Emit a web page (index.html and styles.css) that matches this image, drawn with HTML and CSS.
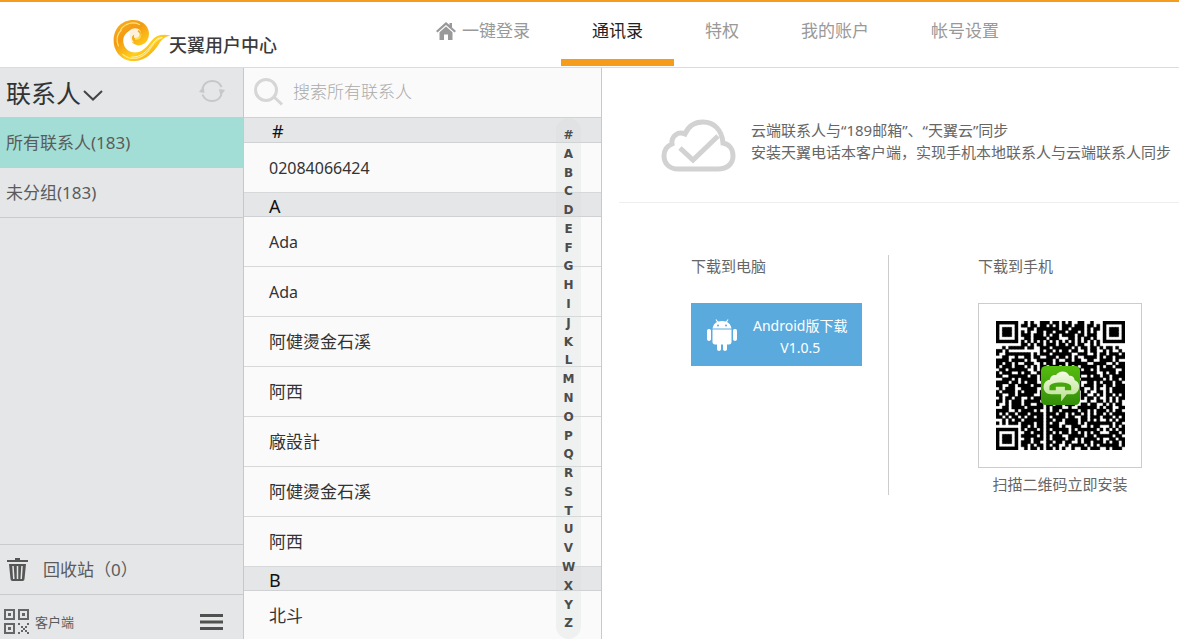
FILE: index.html
```html
<!DOCTYPE html>
<html lang="zh-CN">
<head>
<meta charset="utf-8">
<title>天翼用户中心</title>
<link rel="stylesheet" href="styles.css">
</head>
<body>
<header class="top">
  <a class="brand" href="#">
    <svg class="brand-mark" viewBox="0 0 58 44" aria-hidden="true">
      <defs>
        <linearGradient id="gold" x1="0" y1="0" x2="1" y2="1">
          <stop offset="0" stop-color="#f8b426"/><stop offset=".3" stop-color="#f39a12"/><stop offset=".6" stop-color="#ffcf1c"/><stop offset="1" stop-color="#f08a14"/>
        </linearGradient>
        <linearGradient id="gold2" x1="0" y1="0" x2="0" y2="1">
          <stop offset="0" stop-color="#f4a81c"/><stop offset="1" stop-color="#ffe04a"/>
        </linearGradient>
      </defs>
      <path fill="url(#gold)" d="M21 1C9 1 1 10 1 22c0 13 10 22 22 21 11-1 18-8 24-17 3-5 6-8 12-9-9-2-15 0-19 5-4 5-8 11-15 12-7 1-13-3-14-10-1-6 3-11 7-12-2 6 0 14 8 15 7 0 12-6 11-14C36 6 29 1 21 1z"/>
      <path fill="#fff" d="M14 17c2-6 7-9 12-7 4 2 4 8 0 10-3 1-5-1-4-4-3 1-3 5 0 8-5 0-8-3-8-7z" opacity=".85"/>
      <path fill="none" stroke="url(#gold2)" stroke-width="2" d="M26 12c5 3 2 9-3 8"/>
      <path fill="none" stroke="#ffe680" stroke-width="1.200" d="M10 36c12 9 23 3 30-8 3-5 6-8 11-9M8 11c5-7 14-9 20-5M6 28c-3-7-1-13 3-17"/>
      <path fill="none" stroke="#fff3bd" d="M19 39c11 0 16-6 22-14 3-4 6-6 10-6"/>
    </svg>
    <span>天翼用户中心</span>
  </a>
  <nav class="nav">
    <a href="#"><svg class="home" viewBox="0 0 20 18" aria-hidden="true"><path d="M10 0 0 9l1.500 1.500L10 3l8.500 7.500L20 9l-4-3.600V1h-2.500v2.100z"/><path d="M10 4.500 3.500 10.300V18H8v-5.500h4V18h4.500v-7.700z"/></svg>一键登录</a>
    <a href="#" class="current" aria-current="page">通讯录</a>
    <a href="#">特权</a>
    <a href="#">我的账户</a>
    <a href="#">帐号设置</a>
  </nav>
</header>
<div class="main">
  <aside class="side">
    <div class="side-head">
      <button class="title" type="button">联系人<svg class="chev" viewBox="0 0 20 11" aria-hidden="true"><path d="m1 1 9 8.500L19 1"/></svg></button>
      <button class="sync" type="button" aria-label="刷新"><svg viewBox="0 0 26 24" aria-hidden="true"><path class="ring" d="M3.500 9a10.200 10.200 0 0 1 19-1M22.500 15.500a10.200 10.200 0 0 1-19 0"/><path class="tips" d="m0 13 4.500-6 1 7zM26 11l-4.500 6-1.500-7z"/></svg></button>
    </div>
    <button class="group active" type="button">所有联系人(183)</button>
    <button class="group" type="button">未分组(183)</button>
    <div class="side-foot">
      <button class="trash" type="button">
        <svg viewBox="0 0 22 24" aria-hidden="true"><path fill="#565656" d="M0 2h8V0h5v2h8v2H0zM2 6h17l-1.500 15a2 2 0 0 1-2 2h-10a2 2 0 0 1-2-2z"/><path stroke="#e4e6e7" stroke-width="1.500" d="m6 8 .8 13M10.500 8v13M15 8l-.8 13"/></svg>
        回收站（0）</button>
      <div class="tools">
        <button class="client" type="button">
          <svg viewBox="0 0 25 25" aria-hidden="true"><path fill="none" stroke="#666" stroke-width="2" d="M1 1h9v9H1zM15 1h9v9h-9zM1 15h9v9H1z"/><path fill="#666" d="M4 4h3v3H4zM18 4h3v3h-3zM4 18h3v3H4zM14 14h2v2h-2zM23 14h2v2h-2zM14 23h2v2h-2zM23 23h2v2h-2zM17 17h2v2h-2zM21 17h2v2h-2zM19 19h2v2h-2zM17 21h2v2h-2zM21 21h2v2h-2z"/></svg>
          客户端</button>
        <button class="menu" type="button" aria-label="菜单"><svg viewBox="0 0 23 16" aria-hidden="true"><path d="M0 0h23v3H0zM0 6.500h23v3H0zM0 13h23v3H0z"/></svg></button>
      </div>
    </div>
  </aside>
  <section class="list">
    <label class="search">
      <svg viewBox="0 0 30 28" aria-label="搜索"><circle cx="12" cy="12" r="10.500"/><path d="m20 19 8 7.500"/></svg>
      <input type="text" placeholder="搜索所有联系人" aria-label="搜索所有联系人">
    </label>
    <h2 class="hash">#</h2>
    <ul><li class="latin">02084066424</li></ul>
    <h2>A</h2>
    <ul><li class="latin">Ada</li><li class="latin">Ada</li><li>阿健燙金石溪</li><li>阿西</li><li>廠設計</li><li>阿健燙金石溪</li><li>阿西</li></ul>
    <h2>B</h2>
    <ul><li>北斗</li></ul>
    <nav class="letters" aria-label="字母索引"><a href="#">#</a><a href="#">A</a><a href="#">B</a><a href="#">C</a><a href="#">D</a><a href="#">E</a><a href="#">F</a><a href="#">G</a><a href="#">H</a><a href="#">I</a><a href="#">J</a><a href="#">K</a><a href="#">L</a><a href="#">M</a><a href="#">N</a><a href="#">O</a><a href="#">P</a><a href="#">Q</a><a href="#">R</a><a href="#">S</a><a href="#">T</a><a href="#">U</a><a href="#">V</a><a href="#">W</a><a href="#">X</a><a href="#">Y</a><a href="#">Z</a></nav>
  </section>
  <main class="detail">
    <div class="info">
      <svg class="cloud" viewBox="0 0 75 53" aria-hidden="true"><path d="M17 50h40c9 0 15-5 15-13 0-7-4-12-10-13C61 11 53 3 42 3c-9 0-15 5-18 12-7-3-14 2-13 10-5 2-8 6-8 12 0 8 6 13 14 13z"/><path d="m19 29 13 12 25-24"/></svg>
      <p>云端联系人与“189邮箱”、“天翼云”同步<br>安装天翼电话本客户端，实现手机本地联系人与云端联系人同步</p>
    </div>
    <div class="downloads">
      <section class="pc">
        <h3>下载到电脑</h3>
        <a class="android" href="#">
          <svg viewBox="0 0 30 32" aria-hidden="true"><path d="M5.500 9.500C6 6 8 4 10 3L8.500.800l.8-.5L11 2.600a12 12 0 0 1 8 0L20.700.300l.8.5L20 3c2 1 4 3 4.500 6.500zM5.500 10.500h19V23c0 1.500-1 2.500-2.500 2.500h-2V30c0 2.600-4 2.600-4 0v-4.500h-2V30c0 2.600-4 2.600-4 0v-4.500H8c-1.500 0-2.500-1-2.500-2.500zM0 12c0-2.600 4-2.600 4 0v8c0 2.600-4 2.600-4 0zM26 12c0-2.600 4-2.600 4 0v8c0 2.600-4 2.600-4 0z"/><circle fill="#5aaade" cx="11" cy="6.500" r="1"/><circle fill="#5aaade" cx="19" cy="6.500" r="1"/></svg>
          <span>Android版下载<br>V1.0.5</span>
        </a>
      </section>
      <section class="phone">
        <h3>下载到手机</h3>
        <figure>
          <div class="frame">
            <svg class="code" viewBox="0 0 41 41" role="img" aria-label="二维码">
              <defs><linearGradient id="leaf" x1="0" y1="0" x2="0" y2="1"><stop offset="0" stop-color="#55bd10"/><stop offset="1" stop-color="#338e09"/></linearGradient>
              <linearGradient id="puff" x1="0" y1="0" x2="0" y2="1"><stop offset="0" stop-color="#f4fbe6"/><stop offset="1" stop-color="#b9e08d"/></linearGradient></defs>
              <path id="modules" stroke="#000" stroke-width=".12"/>
              <rect x="14.300" y="14.300" width="12.400" height="12.400" rx="1.500" fill="url(#leaf)"/>
              <path fill="url(#puff)" d="M17.500 23.300c-3 0-3.200-4.200-.4-4.600.2-1.200 1-1.700 2-1.500 1-1.700 3.500-1.500 4.200.2 1-.1 1.600.4 1.700 1.400 2.200.6 1.800 4.400-.8 4.500h-1.700L20.700 25.600v-2.300z"/>
              <path fill="#45a50c" d="M17 20.800c.3-1.700 6.600-1.700 6.900 0v1.200h-2v-1.100h-2.900V22h-2z"/>
            </svg>
          </div>
          <figcaption>扫描二维码立即安装</figcaption>
        </figure>
      </section>
    </div>
  </main>
</div>
<script src="code.js"></script>
</body>
</html>
```
FILE: styles.css
```css
* { box-sizing: border-box; margin: 0; padding: 0; }
body {
  display: flex; flex-direction: column; height: 100vh; overflow: hidden;
  border-top: 2px solid #f59c1c; background: #fff; color: #333;
  font: 17px/24px "Noto Sans", "Noto Sans CJK SC", sans-serif;
}
svg { display: block; flex: none; }
a { color: inherit; text-decoration: none; }
button { border: 0; background: none; color: inherit; font: inherit; text-align: left; cursor: pointer; }
ul { list-style: none; }

.top { display: flex; flex: none; height: 66px; padding-left: 112px; gap: 128px; border-bottom: 1px solid #dcdcdc; }
.brand { display: flex; align-items: flex-start; padding-top: 17px; color: #3b3b3b; font-size: 18px; font-weight: 500; white-space: nowrap; }
.brand-mark { width: 58px; height: 43px; }
.brand span { margin: 14px 0 0 -1px; }
.nav { display: flex; white-space: nowrap; color: #999; }
.nav a { display: flex; align-items: center; gap: 6px; height: 64px; padding: 0 31px; border-bottom: 7px solid transparent; }
.nav .current { color: #222; border-color: #f59c1c; }
.home { width: 20px; height: 18px; fill: #999; }

.main { display: flex; flex: 1; min-height: 0; }
.side { display: flex; flex-direction: column; flex: none; width: 244px; background: #e4e6e7; border-right: 1px solid #c6c8c9; color: #5b5b5b; }
.side-head { display: flex; justify-content: space-between; align-items: center; height: 50px; padding: 0 18px 3px 6px; border-bottom: 1px solid #c9cdcd; }
.title { display: flex; align-items: center; gap: 2px; padding-top: 4px; color: #333; font-size: 25px; }
.chev { width: 20px; height: 11px; margin-top: 5px; fill: none; stroke: #444; stroke-width: 2; }
.sync svg { width: 26px; height: 24px; }
.ring { fill: none; stroke: #c6c8c8; stroke-width: 2; }
.tips { fill: #c6c8c8; }
.group { height: 50px; padding-left: 6px; border-bottom: 1px solid #c8cacc; }
.active { background: #a2ded5; }
.side-foot { margin-top: auto; }
.trash { display: flex; align-items: center; gap: 14px; width: 100%; height: 51px; padding-left: 7px; border: 1px solid #c8cacc; border-width: 1px 0; }
.trash svg { width: 22px; height: 24px; }
.tools { display: flex; justify-content: space-between; align-items: center; height: 44px; padding: 9px 20px 0 4px; }
.client { display: flex; align-items: center; gap: 6px; font-size: 13px; }
.client svg { width: 25px; height: 25px; }
.menu svg { width: 23px; height: 16px; fill: #505050; }

.list { position: relative; flex: none; width: 358px; overflow: hidden; background: #fafafa; border-right: 1px solid #c9c9c9; }
.search { display: flex; align-items: center; gap: 9px; height: 50px; padding: 0 0 2px 10px; border-bottom: 1px solid #cfd1d2; }
.search svg { width: 30px; height: 28px; fill: none; stroke: #d6d6d6; stroke-width: 3; }
.search input { flex: 1; min-width: 0; border: 0; outline: 0; background: none; font: inherit; color: #333; }
.search input::placeholder { color: #aaa; font-weight: 300; opacity: 1; }
.list h2 { height: 24px; padding-left: 25px; background: #e4e6e7; border-bottom: 1px solid #cfd1d2; color: #111; font-size: 18px; font-weight: 400; line-height: 26px; }
.list .hash { height: 25px; padding-left: 28px; }
.list li { height: 50px; padding-left: 25px; border-bottom: 1px solid #d6d8d9; line-height: 50px; }
.list .latin { font-size: 16px; }
.letters { position: absolute; inset: 50px 20px 0 auto; display: flex; flex-direction: column; width: 25px; padding: 8px 0 6px; border-radius: 13px; background: rgba(215, 217, 218, .3); color: #4c4c4c; font: bold 12px/19px "DejaVu Sans", sans-serif; text-align: center; }
.letters a { flex: 1; min-height: 0; }

.detail { flex: 1; min-width: 0; color: #666; font-size: 15px; line-height: 22px; }
.info { display: flex; gap: 15px; margin-left: 17px; padding: 51px 0 30px 42px; border-bottom: 1px solid #eee; }
.cloud { width: 75px; height: 53px; fill: none; stroke: #d2d2d2; stroke-width: 5; }
.info p { white-space: nowrap; }
.downloads { display: flex; margin: 52px 0 0 89px; }
.downloads h3 { margin-bottom: 26px; font-size: 15px; font-weight: 400; }
.pc { width: 198px; height: 240px; border-right: 1px solid #ccc; }
.android { display: flex; align-items: center; gap: 16px; width: 171px; height: 63px; padding-left: 16px; background: #5aaade; color: #fff; font-size: 14px; text-align: center; white-space: nowrap; }
.android svg { width: 30px; height: 32px; fill: #fff; }
.android span { padding-top: 5px; }
.phone { padding-left: 89px; }
.frame { display: grid; place-items: center; width: 164px; height: 165px; border: 1px solid #ccc; }
.code { width: 129px; height: 129px; }
figcaption { padding-top: 5px; text-align: center; }
```
FILE: code.js
```js
const rows = [
  "#######..#.#..###.##.#.#..##..#...#######",
  "#.....#.##.##.##.#.#.###.###.##.#.#.....#",
  "#.###.#...##.#######.##.####.#.##.#.###.#",
  "#.###.#.#.#..##.##.###.###.#.#.#..#.###.#",
  "#.###.#.###.###.#.##.####.##.###..#.###.#",
  "#.....#..##.####.###...##.#.##.#..#.....#",
  "#######.#.#.#.#.#.#.#.#.#.#.#.#.#.#######",
  "........##.#.##.###.##.##.##..#.#........",
  "..#.#####.##..###.######.#.##.##.#.##.#..",
  "##.#..........#.##.#.##.##..#.##..#.#..#.",
  "#..########.#.###.######..###..#.##.###.#",
  "..##..#..##.##..###.##.#.#..####.#.##.###",
  "####.####.#..#####.#..##.##..##..####.#..",
  "##.##.#..###..#.##.###.######..####..#.##",
  "#.###.###.#.#.##.###.#.#.#.#####.#.##.###",
  ".##.######..#.##.##.##.##.#.##.#.#####..#",
  "#.###..#.##..####.###.##..######..#.##.##",
  "##..######.##.#.###.#.#.###..#.##.##.####",
  "..###.#.#####.####.###.##..#######.#.##.#",
  "####.##.#.###..#.##..####.#..##.#.###.##.",
  "##..##.####.###.####.#.#.##.###.##.##.###",
  ".#.###..#####..##.#.###.####..#.#..#.####",
  "#.####.#.####.#####.##.##..#.#..##.#.####",
  "##..##.#####..#..##.#.##.#.##..#.#.##.#.#",
  ".#.##.##..#.###.######.##..#.##.#..#.#.##",
  "##.#.###.#####.#.##.#.####...#..##.#.#.#.",
  "#..#.###.##..##.##.##.###..##.##..#.#.##.",
  "..##.####.#####.#.###..#..######.#.##..##",
  "####..#.####.#..#.##.#####.##.#.###.#.##.",
  "#.#.##.###.####.###.##.#.##.#.#.##.#.####",
  "##.#.##.#.##.##.#.####.##..##.###.###.#.#",
  "..#.#.##.######.##.##.####.##.#.#..#.#.##",
  "#.#.###.####.##.#.##..####.#.########.##.",
  "........##.#.##.####.#..###..#.##...#.#.#",
  "#######.#.###.#.#.#####.#.######.#.#.#.##",
  "#.....#..##.###.##.#.##.##.#.#.##...###.#",
  "#.###.#.#####.#.#.###..#####.##.#####.##.",
  "#.###.#..##.###.#.####.##.#.####.#..##.##",
  "#.###.#.###.##..##.##.##..#.##.###.#.##.#",
  "#.....#.##.#.##.#.##..#.####.#.#.######.#",
  "#######..#.##.#.##.#.#..#..##.###..#.###."
];
let d = "";
rows.forEach((row, y) => [...row].forEach((cell, x) => {
  if (cell === "#") d += `M${x} ${y}h1v1h-1z`;
}));
document.getElementById("modules").setAttribute("d", d);
```
